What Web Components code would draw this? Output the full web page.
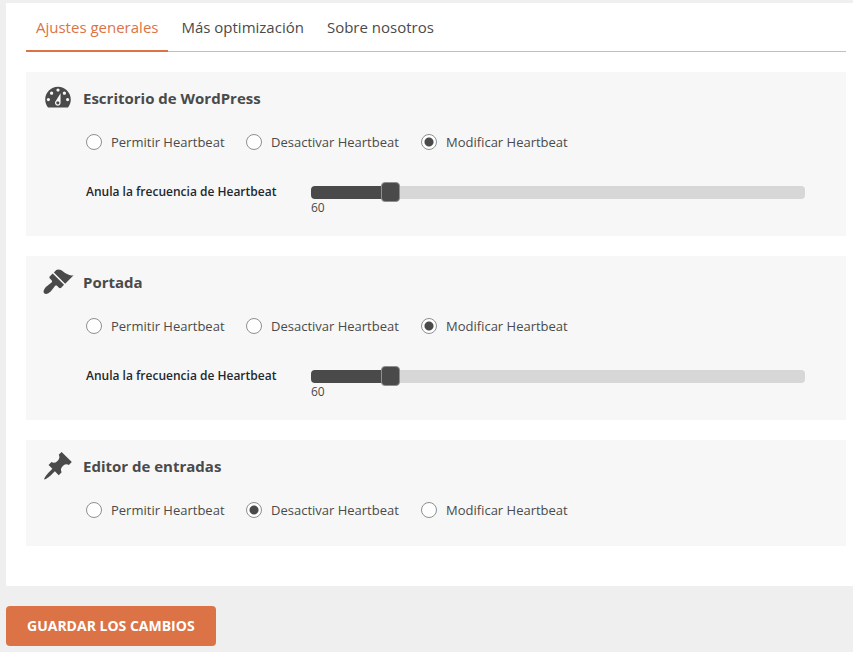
<!DOCTYPE html>
<html lang="es">
<head>
<meta charset="utf-8">
<title>Heartbeat</title>
<style>
body { margin: 0; background: #efefef; color: #4a4a4a; font-family: "Open Sans", "Noto Sans", sans-serif; font-size: 13px; }
</style>
</head>
<body>
<settings-page>
  <tab-bar slot="tabs">
    <tab-link active>Ajustes generales</tab-link>
    <tab-link>Más optimización</tab-link>
    <tab-link>Sobre nosotros</tab-link>
  </tab-bar>
  <heartbeat-card icon="dashboard" mode="modify" frequency="60">Escritorio de WordPress</heartbeat-card>
  <heartbeat-card icon="brush" mode="modify" frequency="60">Portada</heartbeat-card>
  <heartbeat-card icon="pin" mode="disable">Editor de entradas</heartbeat-card>
  <save-button slot="actions">GUARDAR LOS CAMBIOS</save-button>
</settings-page>
<script>
const define = (name, html, setup) => customElements.define(name, class extends HTMLElement {
  connectedCallback() {
    if (this.shadowRoot) return;
    const root = this.attachShadow({ mode: 'open' });
    root.innerHTML = typeof html === 'function' ? html(this) : html;
    if (setup) setup(this, root);
  }
});

define('settings-page', `
  <style>
    :host { display: block; padding: 3px 0 6px 6px; }
    main { display: block; background: #fff; padding: 0 7px 40px 20px; }
    .cards { display: grid; gap: 20px; padding-top: 20px; }
    footer { padding-top: 20px; }
  </style>
  <main><slot name="tabs"></slot><div class="cards"><slot></slot></div></main>
  <footer><slot name="actions"></slot></footer>`);

define('tab-bar', `
  <style>
    :host { display: block; }
    nav { display: flex; gap: 3px; box-shadow: inset 0 -1px #bfbfbf; }
  </style>
  <nav><slot></slot></nav>`);

define('tab-link', `
  <style>
    :host { display: block; }
    a { display: block; height: 47px; line-height: 49px; padding: 0 10px; font-size: 15px; color: #4a4a4a;
        text-decoration: none; border-bottom: 2px solid transparent; white-space: nowrap; }
    :host([active]) a { color: #dc7346; border-color: #dc7346; }
  </style>
  <a href="#"><slot></slot></a>`);

const icons = {
  dashboard: 'M3.76 16h12.48c1.1-1.37 1.76-3.11 1.76-5 0-4.42-3.58-8-8-8s-8 3.58-8 8c0 1.89.66 3.63 1.76 5zM10 4c.55 0 1 .45 1 1s-.45 1-1 1-1-.45-1-1 .45-1 1-1zM6 6c.55 0 1 .45 1 1s-.45 1-1 1-1-.45-1-1 .45-1 1-1zM14 6c.55 0 1 .45 1 1s-.45 1-1 1-1-.45-1-1 .45-1 1-1zM8.7 11.7L11.6 7v6c0 1-.7 1.8-1.7 1.8s-1.8-.8-1.8-1.8c0-.5.2-1 .6-1.3zM4 10c.55 0 1 .45 1 1s-.45 1-1 1-1-.45-1-1 .45-1 1-1zM16 10c.55 0 1 .45 1 1s-.45 1-1 1-1-.45-1-1 .45-1 1-1zM9.9 12c-.55 0-1 .45-1 1s.45 1 1 1 1-.45 1-1-.45-1-1-1z',
  brush: 'M14.48 11.06L7.41 3.99l1.5-1.5c.5-.56 2.3-.47 3.51.32 1.21.8 1.43 1.28 2.91 2.1 1.18.64 2.45 1.26 4.45.85zM13.77 11.77L6.7 4.7 4.93 6.47c-.39.39-.39 1.02 0 1.41l1.06 1.06c.39.39.39 1.03 0 1.42-.6.6-1.43 1.11-2.21 1.69-.35.26-.7.53-1.01.84C1.43 14.23.4 16.08 1.4 17.07c.99 1 2.84-.03 4.18-1.36.31-.31.58-.66.85-1.02.57-.78 1.08-1.61 1.69-2.21.39-.39 1.02-.39 1.41 0l1.06 1.06c.39.39 1.02.39 1.41 0z',
  pin: 'M10.44 3.02l1.82-1.82 6.36 6.35-1.83 1.82c-1.05-.68-2.48-.57-3.41.36l-.75.75c-.92.93-1.04 2.35-.35 3.41l-1.83 1.82-2.41-2.41-2.8 2.79c-.42.42-3.38 2.71-3.8 2.29s1.86-3.39 2.28-3.81l2.79-2.79L4.1 9.36l1.83-1.82c1.05.69 2.48.57 3.4-.36l.75-.75c.93-.92 1.05-2.35.36-3.41z'
};

define('app-icon', el => `
  <style>:host { display: block; width: 32px; height: 32px; } svg { display: block; width: 100%; height: 100%; }</style>
  <svg viewBox="0 0 20 20" aria-hidden="true"><path fill="#4a4a4a" fill-rule="evenodd" d="${icons[el.getAttribute('name')]}"/></svg>`);

define('heartbeat-card', el => {
  const mode = el.getAttribute('mode');
  const freq = el.getAttribute('frequency');
  const option = (value, text) => `<label><input type="radio" name="mode" value="${value}"${mode === value ? ' checked' : ''}>${text}</label>`;
  return `
  <style>
    :host { display: block; background: #f7f7f7; padding: 10px 41px 20px 16px; }
    header { display: flex; align-items: center; gap: 9px; }
    h2 { margin: 0; font-size: 15px; line-height: 32px; font-weight: 700; }
    fieldset { display: grid; grid-template-columns: 160px 175px auto; justify-content: start; border: 0; margin: 0; padding: 18px 0 6px 44px; }
    label { display: flex; align-items: center; gap: 9px; font-size: 13px; line-height: 20px; white-space: nowrap; }
    input[type=radio] { appearance: none; box-sizing: border-box; width: 16px; height: 16px; margin: 0; border: 1px solid #8c8f94; border-radius: 50%; background: #fff; }
    input[type=radio]:checked { background: radial-gradient(circle, #4a4a4a 4px, #fff 5px); }
  </style>
  <header><app-icon name="${el.getAttribute('icon')}"></app-icon><h2><slot></slot></h2></header>
  <fieldset aria-label="Heartbeat">
    ${option('allow', 'Permitir Heartbeat')}${option('disable', 'Desactivar Heartbeat')}${option('modify', 'Modificar Heartbeat')}
  </fieldset>
  ${freq ? `<frequency-slider value="${freq}"></frequency-slider>` : ''}`;
});

define('frequency-slider', el => `
  <style>
    :host { display: grid; grid-template-columns: 225px 1fr; padding: 24px 0 2px 44px; }
    label { font-size: 12px; line-height: 20px; font-weight: 600; color: #23282d; white-space: nowrap; }
    input { appearance: none; display: block; width: 100%; height: 20px; margin: 0; background: none; }
    input::-webkit-slider-runnable-track { height: 13px; border-radius: 4px;
      background: linear-gradient(90deg, #4a4a4a var(--fill), #d7d7d7 var(--fill)); }
    input::-webkit-slider-thumb { appearance: none; box-sizing: border-box; width: 19px; height: 20px; margin-top: -4px;
      background: #4a4a4a; border: 1px solid #8f8f8f; border-radius: 4px; }
    output { display: block; font-size: 12px; line-height: 12px; }
  </style>
  <label for="range">Anula la frecuencia de Heartbeat</label>
  <div><input id="range" type="range" min="15" max="320" value="${el.getAttribute('value')}"><output for="range"></output></div>`,
  (el, root) => {
    const range = root.querySelector('input');
    const update = () => {
      range.style.setProperty('--fill', (range.value - range.min) / (range.max - range.min) * 100 + '%');
      root.querySelector('output').textContent = range.value;
    };
    range.addEventListener('input', update);
    update();
  });

define('save-button', `
  <style>
    :host { display: block; }
    button { height: 40px; padding: 0 21px; border: 0; border-radius: 4px; background: #dc7346; color: #fff;
      font: 700 14px/40px "Open Sans", "Noto Sans", sans-serif; }
  </style>
  <button type="button"><slot></slot></button>`);
</script>
</body>
</html>
